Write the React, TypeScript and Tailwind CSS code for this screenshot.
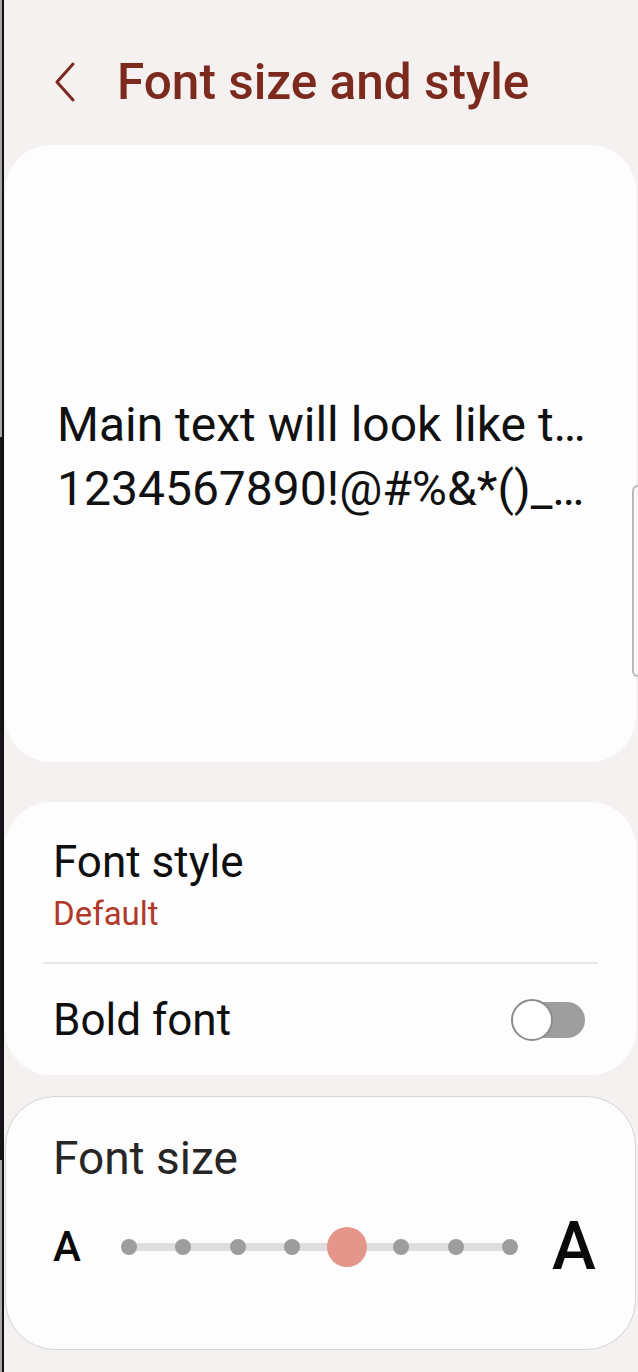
import React from "react";

const STEPS = 8;
const CURRENT = 4;

function Chevron() {
  return (
    <svg width="22" height="40" viewBox="0 0 22 40" fill="none">
      <polyline
        points="19,2 3,20 19,38"
        stroke="#7d2a1e"
        strokeWidth="3"
        strokeLinecap="round"
        strokeLinejoin="round"
      />
    </svg>
  );
}

function Toggle() {
  return (
    <div className="relative w-[74px] h-[42px]">
      <div className="absolute right-0 top-[3px] w-[62px] h-[36px] rounded-full bg-[#9e9e9e]" />
      <div className="absolute left-0 top-0 w-[42px] h-[42px] rounded-full bg-white border-2 border-[#8c8c8c]" />
    </div>
  );
}

function SizeSlider() {
  return (
    <div className="relative w-[397px] h-[40px] flex items-center justify-between">
      <div className="absolute left-[4px] right-[4px] top-[16px] h-[8px] rounded-full bg-[#dedede]" />
      {Array.from({ length: STEPS }).map((_, i) => (
        <div key={i} className="relative w-4 h-4 flex items-center justify-center">
          {i === CURRENT ? (
            <div className="shrink-0 w-10 h-10 rounded-full bg-[#e4968a]" />
          ) : (
            <div className="w-4 h-4 rounded-full bg-[#9d9d9d]" />
          )}
        </div>
      ))}
    </div>
  );
}

export default function App() {
  return (
    <div
      className="relative flex w-[638px] h-[1372px] overflow-hidden bg-[#f4f1f0]"
      style={{ fontFamily: "Roboto, 'Noto Sans', sans-serif" }}
    >
      {/* left edge strip */}
      <div className="flex flex-col w-[4px] border-r-2 border-[#111]">
        <div className="h-[437px] bg-[#a8a8a8]" />
        <div className="h-[723px] bg-[#17171b]" />
        <div className="flex-1 bg-[#a8a8a8]" />
      </div>

      <div className="flex-1 flex flex-col pl-[1px] pr-[2px]">
        {/* header */}
        <div className="flex items-start h-[145px] pt-[54px]">
          <div className="ml-[49px] mt-[8px]">
            <Chevron />
          </div>
          <h1 className="ml-[41px] text-[49.5px] leading-[56px] font-medium text-[#7d2a1e]">
            Font size and style
          </h1>
        </div>

        {/* preview */}
        <div className="h-[617px] rounded-[46px] bg-[#fdfdfd] flex flex-col justify-center pl-[52px] pt-[6px]">
          <p className="text-[48px] leading-[64px] text-[#111111] whitespace-nowrap">
            Main text will look like t…
          </p>
          <p className="text-[48px] leading-[64px] text-[#111111] whitespace-nowrap">
            1234567890!@#%&*()_…
          </p>
        </div>

        {/* style options */}
        <div className="mt-[40px] h-[273px] rounded-[46px] bg-[#fdfdfd] flex flex-col">
          <div className="pt-[34px] pb-[28px] pl-[48px]">
            <div className="text-[44px] leading-[52px] text-[#0f0f0f]">Font style</div>
            <div className="mt-[6px] text-[33px] leading-[40px] text-[#b0392a]">Default</div>
          </div>
          <div className="mx-[38px] h-[2px] bg-[#e8e8e8]" />
          <div className="flex-1 flex items-center justify-between pl-[48px] pr-[51px]">
            <div className="text-[44px] leading-[52px] text-[#0f0f0f]">Bold font</div>
            <Toggle />
          </div>
        </div>

        {/* font size */}
        <div className="mt-[21px] h-[254px] rounded-[50px] bg-[#fdfdfd] border border-[#d4d4d4] pt-[34px] pl-[47px] pr-[38px]">
          <div className="text-[46px] leading-[54px] text-[#262626]">Font size</div>
          <div className="mt-[30px] h-[64px] flex items-center">
            <span className="w-[68px] text-[42px] leading-[64px] font-medium text-[#0a0a0a]">A</span>
            <SizeSlider />
            <span className="ml-[34px] text-[66px] leading-[64px] font-medium text-[#0a0a0a]">A</span>
          </div>
        </div>
      </div>

      {/* edge panel handle */}
      <div className="absolute right-0 top-[485px] w-[6px] h-[192px] rounded-l-[6px] border-2 border-r-0 border-[#b8b8b8]" />
    </div>
  );
}
